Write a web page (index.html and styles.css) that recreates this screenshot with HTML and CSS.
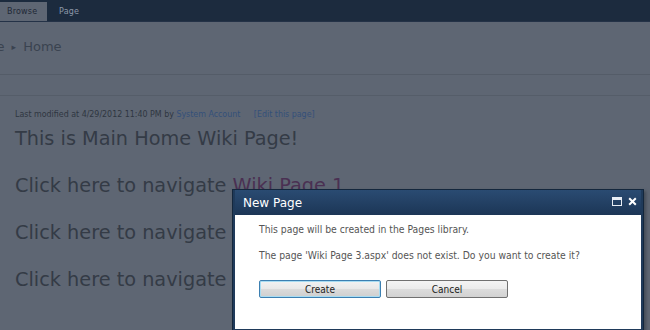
FILE: index.html
```html
<!DOCTYPE html>
<html lang="en">
<head>
    <meta charset="UTF-8">
    <title>Home - Wiki</title>
    <link rel="stylesheet" href="styles.css">
</head>
<body>
    <div class="ribbon">
        <span class="tab tab-active">Browse</span>
        <span class="tab">Page</span>
    </div>

    <div class="titlearea">
        <div class="breadcrumb">Home <span class="sep">&#9656;</span> Home</div>
    </div>

    <div class="content">
        <div class="modified">
            Last modified at 4/29/2012 11:40 PM by <a href="#">System Account</a>
            <a href="#" class="edit">[Edit this page]</a>
        </div>
        <p class="wiki-line">This is Main Home Wiki Page!</p>
        <p class="wiki-line nav">Click here to navigate <a href="#" class="visited">Wiki Page 1</a></p>
        <p class="wiki-line nav">Click here to navigate <a href="#">Wiki Page 2</a></p>
        <p class="wiki-line nav">Click here to navigate <a href="#">Wiki Page 3</a></p>
    </div>

    <div class="dialog">
        <div class="dialog-title">
            <span>New Page</span>
            <span class="dialog-icons">
                <svg width="10" height="9" viewBox="0 0 10 9"><rect x="0.5" y="0.5" width="9" height="8" fill="none" stroke="#e8eef5"/><rect x="1" y="1" width="8" height="2" fill="#e8eef5"/></svg>
                <svg width="9" height="9" viewBox="0 0 9 9"><path d="M1.2 1.2 L7.8 7.8 M7.8 1.2 L1.2 7.8" stroke="#ffffff" stroke-width="2"/></svg>
            </span>
        </div>
        <div class="dialog-body">
            <p>This page will be created in the Pages library.</p>
            <p>The page 'Wiki Page 3.aspx' does not exist. Do you want to create it?</p>
            <div class="buttons">
                <button class="btn btn-focus">Create</button>
                <button class="btn">Cancel</button>
            </div>
        </div>
    </div>
</body>
</html>
```
FILE: styles.css
```css
* {
    margin: 0;
    padding: 0;
    box-sizing: border-box;
}

body {
    font-family: 'DejaVu Sans', Verdana, sans-serif;
    background-color: #5e6673;
    color: #343b46;
    width: 650px;
    height: 330px;
    overflow: hidden;
}

a {
    color: #3b5474;
    text-decoration: none;
}

/* ribbon */
.ribbon {
    height: 22px;
    background-color: #1c2b3e;
    border-bottom: 1px solid #243247;
    display: flex;
    align-items: flex-end;
}

.tab {
    font-size: 8px;
    padding: 0 10px 4px 8px;
    height: 19px;
    line-height: 19px;
    color: #8c98a8;
    letter-spacing: 0.2px;
}

.tab-active {
    background-color: #5e6673;
    color: #1e2836;
    width: 47px;
    padding-left: 7px;
    margin-right: 4px;
}

/* title area */
.titlearea {
    height: 53px;
    border-bottom: 1px solid #545c68;
    overflow: hidden;
}

.breadcrumb {
    margin-left: -34px;
    padding-top: 17px;
    font-size: 13px;
    color: #3a4350;
    white-space: nowrap;
}

.sep {
    font-size: 9px;
    margin: 0 3px;
    position: relative;
    top: -1px;
}

/* content */
.content {
    border-top: 1px solid #555d69;
    margin-top: 20px;
    padding: 13px 0 0 15px;
}

.modified {
    font-family: 'DejaVu Sans Condensed', 'DejaVu Sans', sans-serif;
    font-size: 8.8px;
    color: #2f3641;
    white-space: nowrap;
}

.modified a {
    color: #34507a;
}

.modified .edit {
    margin-left: 11px;
}

.wiki-line {
    font-size: 19.3px;
    line-height: 24px;
    color: #343b46;
    margin-top: 8px;
    white-space: nowrap;
}

.wiki-line.nav {
    margin-top: 23px;
}

.wiki-line a {
    color: #343b46;
}

.wiki-line a.visited {
    color: #4a3052;
}

/* modal dialog over the page */
.dialog {
    position: absolute;
    left: 232px;
    top: 189px;
    width: 412px;
    height: 142px;
    background-color: #1f3a5a;
    border: 1px solid #14273d;
    padding: 0 2px 2px 2px;
    box-shadow: 2px 2px 3px rgba(40, 45, 55, 0.5);
}

.dialog-title {
    height: 25px;
    display: flex;
    justify-content: space-between;
    align-items: center;
    padding: 0 4px 0 8px;
    color: #ffffff;
    font-size: 12px;
    background: linear-gradient(#2a4b72, #1c3656);
}

.dialog-icons {
    display: flex;
    gap: 6px;
    align-items: center;
    margin-top: -3px;
}

.dialog-body {
    background-color: #ffffff;
    height: 114px;
    padding: 8px 0 0 24px;
    color: #555555;
    font-family: 'DejaVu Sans Condensed', 'DejaVu Sans', sans-serif;
    font-size: 10.3px;
}

.dialog-body p {
    margin-bottom: 14px;
}

.buttons {
    display: flex;
    gap: 5px;
    margin-top: 19px;
}

.btn {
    width: 122px;
    height: 18px;
    font-family: 'DejaVu Sans Condensed', 'DejaVu Sans', sans-serif;
    font-size: 10px;
    color: #222222;
    background: linear-gradient(#f4f4f4 0%, #ebebeb 50%, #dcdcdc 51%, #d2d2d2 100%);
    border: 1px solid #707070;
    border-radius: 2px;
}

.btn-focus {
    border-color: #3c7fb1;
    box-shadow: inset 0 0 0 1px #a8dcf2;
    background: linear-gradient(#f2f2f2 0%, #e8e8e8 50%, #dbdbdb 51%, #cfcfcf 100%);
}
```
